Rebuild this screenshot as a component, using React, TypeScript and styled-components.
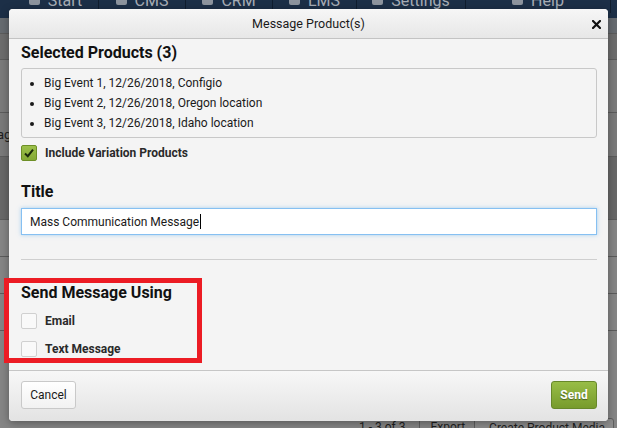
import React from 'react';
import styled, { createGlobalStyle } from 'styled-components';

const GlobalStyle = createGlobalStyle`
  html, body {
    margin: 0;
    padding: 0;
  }
  body {
    font-family: Roboto, 'Liberation Sans', Arial, sans-serif;
    background: #6e6e6e;
  }
  * {
    box-sizing: border-box;
  }
`;

const Page = styled.div`
  position: relative;
  width: 617px;
  height: 428px;
  overflow: hidden;
  display: flex;
  flex-direction: column;
  background: #6e6e6e;
`;

const NavBar = styled.div`
  height: 18px;
  flex: 0 0 18px;
  background: #1c2f47;
  overflow: hidden;
`;

const NavRow = styled.div`
  display: flex;
  align-items: center;
  height: 26px;
  margin-top: -13px;
  padding-left: 13px;
`;

const NavItem = styled.div<{ $w: number }>`
  width: ${(p) => p.$w}px;
  display: flex;
  align-items: center;
  justify-content: center;
  gap: 8px;
  height: 26px;
  color: #a7adb6;
  font-size: 16px;
  border-right: 1px solid #0f1d2e;
`;

const NavIcon = styled.span`
  display: inline-block;
  width: 11px;
  height: 10px;
  background: #8d949e;
  border-radius: 2px;
`;

const BgRow = styled.div<{ $h: number; $bg: string }>`
  flex: 0 0 ${(p) => p.$h}px;
  height: ${(p) => p.$h}px;
  background: ${(p) => p.$bg};
  border-bottom: 1px solid #5c5c5c;
  display: flex;
  align-items: center;
  font-size: 13px;
  color: #1e1e1e;
`;

const BgText = styled.span`
  margin-left: -3px;
`;

const Filler = styled.div`
  flex: 1;
  background: #858585;
`;

const PagerRow = styled.div`
  flex: 0 0 10px;
  height: 10px;
  background: #858585;
  display: flex;
  justify-content: flex-end;
  align-items: flex-start;
  overflow: hidden;
  padding-right: 3px;
`;

const PagerItem = styled.div<{ $boxed?: boolean }>`
  padding: 1px 9px 0 10px;
  font-size: 12px;
  line-height: 16px;
  color: #1e1e1e;
  border-left: 1px solid #5e5e5e;
  ${(p) =>
    p.$boxed
      ? 'padding: 1px 8px 0 14px; border: 1px solid #5e5e5e; border-radius: 3px; background: #8c8c8c;'
      : ''}
`;

const PagerPlain = styled.div`
  padding: 1px 14px 0;
  font-size: 12px;
  line-height: 16px;
  color: #1e1e1e;
`;

const Modal = styled.div`
  position: absolute;
  left: 9px;
  top: 9px;
  width: 599px;
  height: 412px;
  background: #f4f4f4;
  border-radius: 4px;
  box-shadow: 0 2px 8px rgba(0, 0, 0, 0.35);
  display: flex;
  flex-direction: column;
  overflow: hidden;
`;

const Header = styled.div`
  position: relative;
  height: 30px;
  flex: 0 0 30px;
  background: linear-gradient(#f6f6f6, #e7e7e7);
  border-bottom: 1px solid #c3c3c3;
  display: flex;
  align-items: center;
  justify-content: center;
  font-size: 12.5px;
  color: #1a1a1a;
`;

const Close = styled.span`
  position: absolute;
  right: 7px;
  top: 11px;
  width: 9px;
  height: 9px;
  display: flex;
`;

const Body = styled.div`
  flex: 1;
  padding: 4px 11px 0 12px;
  display: flex;
  flex-direction: column;
`;

const Heading = styled.div<{ $mt: number }>`
  margin-top: ${(p) => p.$mt}px;
  font-size: 16px;
  line-height: 20px;
  font-weight: 700;
  color: #111;
`;

const ProductBox = styled.div`
  margin-top: 5px;
  border: 1px solid #c8c8c8;
  border-radius: 3px;
  padding: 4px 0;
`;

const ProductList = styled.ul`
  margin: 0;
  padding-left: 22px;
`;

const ProductItem = styled.li`
  font-size: 12px;
  line-height: 20px;
  color: #1a1a1a;
`;

const CheckRow = styled.label<{ $mt: number }>`
  margin-top: ${(p) => p.$mt}px;
  display: flex;
  align-items: center;
  gap: 8px;
  font-size: 12px;
  font-weight: 700;
  color: #2a2a2a;
  height: 16px;
`;

const Box = styled.span<{ $checked?: boolean }>`
  width: 16px;
  height: 16px;
  border-radius: 2px;
  border: 1px solid ${(p) => (p.$checked ? '#6d8f26' : '#d0d0d0')};
  background: ${(p) => (p.$checked ? 'linear-gradient(#9cc04a, #84a935)' : '#f9f9f9')};
  display: flex;
  align-items: center;
  justify-content: center;
`;

const TitleInput = styled.div`
  margin-top: 6px;
  height: 27px;
  background: #fff;
  border: 1px solid #86c0f2;
  box-shadow: 0 0 4px rgba(102, 175, 233, 0.55);
  display: flex;
  align-items: center;
  padding-left: 8px;
  font-size: 12px;
  color: #1a1a1a;
`;

const Caret = styled.span`
  display: inline-block;
  width: 1px;
  height: 15px;
  background: #000;
  margin-left: 1px;
`;

const Divider = styled.hr`
  margin: 24px 0 0;
  border: 0;
  border-top: 1px solid #cfcfcf;
`;

const Options = styled.div`
  margin-top: 10px;
  display: flex;
  flex-direction: column;
  gap: 12px;
`;

const Footer = styled.div`
  height: 51px;
  flex: 0 0 51px;
  border-top: 1px solid #c6c6c6;
  background: linear-gradient(#f7f7f7, #e3e3e3);
  display: flex;
  justify-content: space-between;
  align-items: flex-start;
  padding: 10px 11px 0 12px;
`;

const Button = styled.button<{ $primary?: boolean }>`
  height: 28px;
  padding: 0 8px;
  border-radius: 3px;
  font-family: Roboto, 'Liberation Sans', Arial, sans-serif;
  font-size: 12px;
  font-weight: ${(p) => (p.$primary ? 700 : 400)};
  color: ${(p) => (p.$primary ? '#fff' : '#1a1a1a')};
  text-shadow: ${(p) => (p.$primary ? '0 1px 1px rgba(0,0,0,0.45)' : 'none')};
  background: ${(p) =>
    p.$primary ? 'linear-gradient(#98bd47, #779b2c)' : 'linear-gradient(#ffffff, #f2f2f2)'};
  border: 1px solid ${(p) => (p.$primary ? '#67882a' : '#c9c9c9')};
  width: ${(p) => (p.$primary ? 46 : 55)}px;
`;

const Annotation = styled.div`
  position: absolute;
  left: 4px;
  top: 278px;
  width: 198px;
  height: 85px;
  border: 5px solid #ec1c24;
  pointer-events: none;
`;

const navItems = [
  { label: 'Start', w: 86 },
  { label: 'CMS', w: 87 },
  { label: 'CRM', w: 87 },
  { label: 'LMS', w: 84 },
  { label: 'Settings', w: 109 },
  { label: 'Help', w: 145 },
];

const bgRows = [
  { h: 16, bg: '#666b70' },
  { h: 26, bg: '#6d6d6d' },
  { h: 53, bg: '#7b7b7b' },
  { h: 44, bg: '#7a7a7a', text: 'ag' },
  { h: 63, bg: '#686868' },
  { h: 37, bg: '#858585' },
  { h: 37, bg: '#858585' },
  { h: 37, bg: '#858585' },
];

const products = [
  'Big Event 1, 12/26/2018, Configio',
  'Big Event 2, 12/26/2018, Oregon location',
  'Big Event 3, 12/26/2018, Idaho location',
];

const App = () => {
  return (
    <Page>
      <GlobalStyle />
      <NavBar>
        <NavRow>
          {navItems.map((n) => (
            <NavItem key={n.label} $w={n.w}>
              <NavIcon />
              {n.label}
            </NavItem>
          ))}
        </NavRow>
      </NavBar>
      {bgRows.map((r, i) => (
        <BgRow key={i} $h={r.h} $bg={r.bg}>
          {r.text && <BgText>{r.text}</BgText>}
        </BgRow>
      ))}
      <Filler />
      <PagerRow>
        <PagerPlain>1 - 3 of 3</PagerPlain>
        <PagerItem>Export</PagerItem>
        <PagerItem $boxed>Create Product Media</PagerItem>
      </PagerRow>

      <Modal>
        <Header>
          Message Product(s)
          <Close>
            <svg width="9" height="9" viewBox="0 0 9 9">
              <path d="M1 1 L8 8 M8 1 L1 8" stroke="#111" strokeWidth="2.2" strokeLinecap="square" />
            </svg>
          </Close>
        </Header>
        <Body>
          <Heading $mt={0}>Selected Products (3)</Heading>
          <ProductBox>
            <ProductList>
              {products.map((p) => (
                <ProductItem key={p}>{p}</ProductItem>
              ))}
            </ProductList>
          </ProductBox>
          <CheckRow $mt={7}>
            <Box $checked>
              <svg width="12" height="12" viewBox="0 0 12 12">
                <path d="M2 6.5 L4.8 9.2 L10 2.6" fill="none" stroke="#1b2a0c" strokeWidth="2" />
              </svg>
            </Box>
            Include Variation Products
          </CheckRow>
          <Heading $mt={21}>Title</Heading>
          <TitleInput>
            Mass Communication Message
            <Caret />
          </TitleInput>
          <Divider />
          <Heading $mt={23}>Send Message Using</Heading>
          <Options>
            <CheckRow $mt={0}>
              <Box />
              Email
            </CheckRow>
            <CheckRow $mt={0}>
              <Box />
              Text Message
            </CheckRow>
          </Options>
        </Body>
        <Footer>
          <Button>Cancel</Button>
          <Button $primary>Send</Button>
        </Footer>
      </Modal>
      <Annotation />
    </Page>
  );
};

export default App;
